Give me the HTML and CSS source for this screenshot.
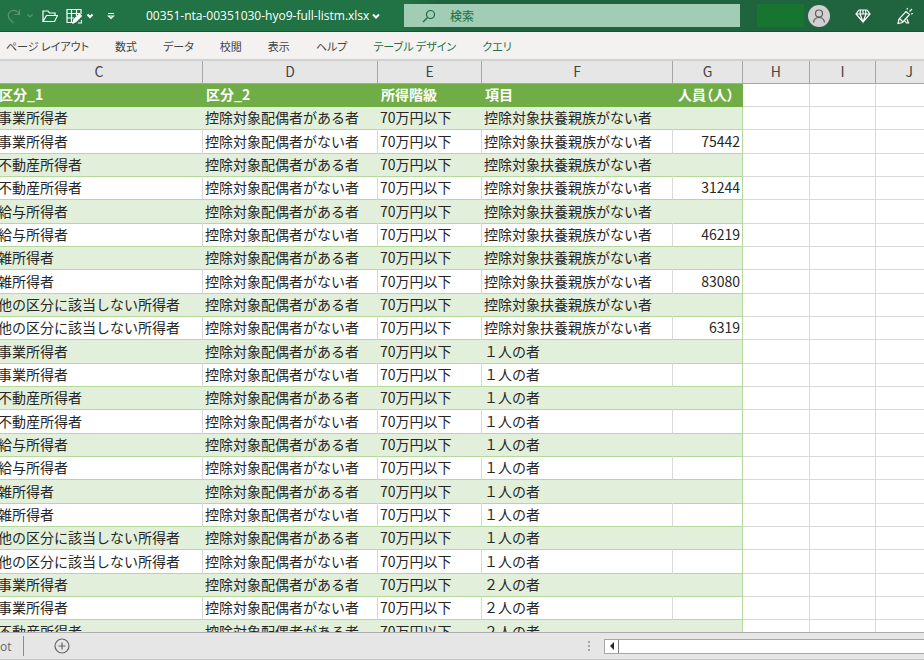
FILE: index.html
```html
<!DOCTYPE html>
<html lang="ja">
<head>
    <meta charset="UTF-8">
    <title>00351-nta-00351030-hyo9-full-listm.xlsx</title>
    <link rel="stylesheet" href="styles.css">
</head>
<body>
    <header class="titlebar">
        <div class="quick-access">
            <button class="icon-button faded" aria-label="やり直し">
                <svg width="16" height="16" viewBox="0 0 16 16"><path d="M13.500 1.500v5h-5M13 6C11.500 2.500 8 1.500 5 3C1.500 5 1.500 9 4 11.500L7.500 15"/></svg>
                <svg width="8" height="8" viewBox="0 0 8 8"><path d="M1.500 2.500L4 5L6.500 2.500"/></svg>
            </button>
            <button class="icon-button" aria-label="開く">
                <svg width="16" height="16" viewBox="0 0 16 16"><path d="M1 13.500V3h5l1.500 2H13v2.500M1 13.500L4.500 7.500H15.500L12.500 13.500z"/></svg>
            </button>
            <button class="icon-button" aria-label="表の編集">
                <svg width="16" height="16" viewBox="0 0 16 16"><path d="M7 14.500H1V1.500H15V6M1 5.500H14M1 10H8M5.500 1.500V14.500M10.500 1.500V8"/><path d="M7 15l1-3.500L13.500 6l2 2L10 13.500z" fill="#fff"/><path d="M12 15h3.500v-3"/></svg>
                <svg class="bold" width="8" height="8" viewBox="0 0 8 8"><path d="M1.500 2.500L4 5L6.500 2.500"/></svg>
            </button>
            <button class="icon-button customize" aria-label="クイック アクセス ツール バーのユーザー設定">
                <svg width="8" height="8" viewBox="0 0 8 8"><path d="M1 1.500H7M1.500 4L4 6.500L6.500 4z"/></svg>
            </button>
        </div>
        <button class="file-name">
            00351-nta-00351030-hyo9-full-listm.xlsx
            <svg class="bold" width="8" height="8" viewBox="0 0 8 8"><path d="M1 2.500L4 5.500L7 2.500"/></svg>
        </button>
        <label class="search">
            <svg width="14" height="14" viewBox="0 0 14 14"><circle cx="8.500" cy="5.500" r="4"/><path d="M5.500 8.500L1 13"/></svg>
            <input type="text" placeholder="検索" aria-label="検索">
        </label>
        <div class="account">
            <span class="user-name"></span>
            <button class="avatar" aria-label="アカウント">
                <svg width="16" height="16" viewBox="0 0 16 16"><circle cx="8" cy="5.500" r="3.500"/><path d="M2.500 14.500C3 11 5 9.500 8 9.500S13 11 13.500 14.500"/></svg>
            </button>
        </div>
        <div class="extras">
            <button class="icon-button" aria-label="プレミアム">
                <svg width="16" height="16" viewBox="0 0 16 16"><path d="M4 2H12L15 6L8 14L1 6zM1 6H15M5.500 2L5 6L8 14L11 6L10.500 2M8 2V6"/></svg>
            </button>
            <button class="icon-button" aria-label="新機能">
                <svg width="18" height="18" viewBox="0 0 18 18"><path d="M10 4.500L13.500 7.500L6.500 15.500L2 16.500L3 12zM3.500 11.500L7 15M8.500 13.500l2 2.500h2l-1.500-4M11 2.500l.5-1.500M13.500 4.500L16 2M15 7l2-.5"/></svg>
            </button>
        </div>
    </header>

    <nav class="ribbon">
        <a href="#">ページ レイアウト</a>
        <a href="#">数式</a>
        <a href="#">データ</a>
        <a href="#">校閲</a>
        <a href="#">表示</a>
        <a href="#">ヘルプ</a>
        <a href="#" class="context">テーブル デザイン</a>
        <a href="#" class="context">クエリ</a>
    </nav>

    <main class="sheet">
        <table class="grid">
            <colgroup>
                <col class="col-c">
                <col class="col-d">
                <col class="col-e">
                <col class="col-f">
                <col class="col-g">
                <col class="col-empty">
                <col class="col-empty">
                <col class="col-empty">
            </colgroup>
            <thead>
                <tr class="letters">
                    <th>C</th><th>D</th><th>E</th><th>F</th><th>G</th><th>H</th><th>I</th><th>J</th>
                </tr>
            </thead>
            <tbody id="rows">
                <tr class="fields">
                    <th>区分_1</th><th>区分_2</th><th>所得階級</th><th>項目</th><th class="number">人員（人）</th><td></td><td></td><td></td>
                </tr>
            </tbody>
        </table>
    </main>

    <footer class="sheet-bar">
        <button class="sheet-tab">ot</button>
        <button class="icon-button add-sheet" aria-label="新しいシート">
            <svg width="16" height="16" viewBox="0 0 16 16"><circle cx="8" cy="8" r="7"/><path d="M8 4.500V11.500M4.500 8H11.500"/></svg>
        </button>
        <svg class="grip" width="4" height="12" viewBox="0 0 4 12"><path d="M1 1h2v2H1zM1 5h2v2H1zM1 9h2v2H1z"/></svg>
        <div class="scrollbar">
            <button class="scroll-left" aria-label="左へスクロール">
                <svg width="6" height="8" viewBox="0 0 6 8"><path d="M5 0V8L1 4z"/></svg>
            </button>
        </div>
    </footer>

    <script>
        const incomes = ['事業所得者', '不動産所得者', '給与所得者', '雑所得者', '他の区分に該当しない所得者'];
        const spouses = ['控除対象配偶者がある者', '控除対象配偶者がない者'];
        const items = ['控除対象扶養親族がない者', '１人の者', '２人の者'];
        const counts = { 1: 75442, 3: 31244, 5: 46219, 7: 83080, 9: 6319 };
        const rowCount = 23;

        const tbody = document.getElementById('rows');
        for (let i = 0; i < rowCount; i++) {
            const income = incomes[Math.floor(i / 2) % incomes.length];
            const item = items[Math.floor(i / 10)];
            const row = document.createElement('tr');
            row.className = i % 2 === 0 ? 'banded' : 'plain';
            row.innerHTML = `<td>${income}</td><td>${spouses[i % 2]}</td><td>70万円以下</td><td>${item}</td>`
                + `<td class="number">${counts[i] || ''}</td><td></td><td></td><td></td>`;
            tbody.appendChild(row);
        }
    </script>
</body>
</html>
```

FILE: styles.css
```css
* {
    box-sizing: border-box;
}

body {
    margin: 0;
    height: 100vh;
    display: flex;
    flex-direction: column;
    overflow: hidden;
    font-family: "Noto Sans CJK JP", sans-serif;
    font-size: 14px;
    color: #262626;
    background-color: #ffffff;
}

button {
    padding: 0;
    border: 0;
    background: none;
    font: inherit;
    color: inherit;
    cursor: pointer;
}

svg {
    flex: none;
    fill: none;
    stroke: currentColor;
    stroke-width: 1.2;
}

svg.bold {
    stroke-width: 2;
}

/* title bar */
.titlebar {
    flex: none;
    display: flex;
    align-items: center;
    height: 32px;
    padding: 0 10px 0 6px;
    background: linear-gradient(to right, #217346 400px, #20643f 440px);
    border-bottom: 1px solid #0d5a30;
    color: #ffffff;
}

.quick-access {
    display: flex;
    align-items: center;
    gap: 8px;
}

.icon-button {
    display: flex;
    align-items: center;
    gap: 4px;
}

.faded {
    color: #5a9474;
}

.customize {
    padding: 0 5px;
}

.file-name {
    display: flex;
    align-items: center;
    gap: 3px;
    width: 236px;
    margin-left: 26px;
    font-family: "Open Sans", sans-serif;
    font-size: 12px;
    white-space: nowrap;
}

.search {
    flex: 1;
    display: flex;
    align-items: center;
    gap: 14px;
    height: 23px;
    margin-left: 22px;
    padding-left: 18px;
    background-color: #a0cdb4;
    color: #1b6a41;
}

.search input {
    flex: 1;
    min-width: 0;
    padding: 0;
    border: 0;
    outline: 0;
    background: none;
    font: inherit;
    font-size: 12px;
    color: inherit;
}

.search input::placeholder {
    color: inherit;
    opacity: 1;
}

.account {
    display: flex;
    align-items: center;
    gap: 4px;
    margin-left: 17px;
}

.user-name {
    width: 47px;
    height: 23px;
    background-color: #16752f;
}

.avatar {
    display: flex;
    align-items: center;
    justify-content: center;
    width: 22px;
    height: 22px;
    border-radius: 50%;
    background-color: #d2d0d0;
    color: #5c5a5a;
}

.extras {
    display: flex;
    align-items: center;
    gap: 25px;
    margin-left: 25px;
}

/* ribbon tabs */
.ribbon {
    flex: none;
    display: flex;
    align-items: center;
    gap: 26px;
    height: 29px;
    padding: 0 6px;
    background-color: #f3f2f1;
    border-bottom: 2px solid #d2d2d2;
    font-size: 11px;
    font-feature-settings: "palt";
    white-space: nowrap;
}

.ribbon a {
    color: #444444;
    text-decoration: none;
}

.ribbon .context {
    color: #217346;
}

/* worksheet */
.sheet {
    flex: 1;
    min-height: 0;
    overflow: hidden;
}

/* column C starts just outside the window */
.grid {
    width: 947px;
    margin-left: -4px;
    table-layout: fixed;
    border-collapse: separate;
    border-spacing: 0;
    line-height: 20px;
    white-space: nowrap;
}

.col-c {
    width: 207px;
}

.col-d {
    width: 175px;
}

.col-e {
    width: 104px;
}

.col-f {
    width: 191px;
}

.col-g {
    width: 70px;
}

.grid th,
.grid td {
    height: 23px;
    padding: 0 2px 2px;
    border-right: 1px solid #d9d9d9;
    border-bottom: 1px solid #d9d9d9;
    text-align: left;
}

.grid tbody tr:nth-child(3n) td {
    height: 24px;
}

.grid .letters th {
    background-color: #e6e6e6;
    border-color: #a6a6a6;
    color: #444444;
    font-weight: normal;
    text-align: center;
}

.grid .fields th {
    padding: 0 3px 2px;
    background-color: #70ad47;
    border-color: #70ad47;
    color: #ffffff;
}

.grid .number {
    text-align: right;
}

.grid .fields .number {
    padding-right: 8px;
    font-feature-settings: "palt";
}

.plain td:nth-child(-n+5),
.banded td:nth-child(-n+5) {
    border-bottom-color: #b5d99c;
}

.banded td:nth-child(-n+5) {
    background-color: #e2efda;
    border-right-color: #e2efda;
}

.banded td:nth-child(5),
.plain td:nth-child(5) {
    border-right-color: #b5d99c;
}

/* sheet tabs and scroll bar */
.sheet-bar {
    flex: none;
    display: flex;
    align-items: center;
    height: 28px;
    background-color: #e6e6e6;
    border-top: 1px solid #ababab;
    border-bottom: 1px solid #c6c6c6;
    color: #666666;
}

.sheet-tab {
    width: 24px;
    height: 20px;
    border-right: 1px solid #8c8c8c;
    font-family: "Open Sans", sans-serif;
    font-size: 12px;
    text-align: left;
}

.add-sheet {
    margin-left: 30px;
}

.grip {
    margin-left: auto;
    margin-right: 13px;
    fill: #a6a6a6;
    stroke: none;
}

.scrollbar {
    width: 320px;
    height: 15px;
    background-color: #ffffff;
    border: 1px solid #a6a6a6;
    border-right: 0;
}

.scroll-left {
    display: flex;
    align-items: center;
    justify-content: center;
    width: 14px;
    height: 13px;
    border-right: 1px solid #7f7f7f;
}

.scroll-left svg {
    fill: #262626;
    stroke: none;
}
```
